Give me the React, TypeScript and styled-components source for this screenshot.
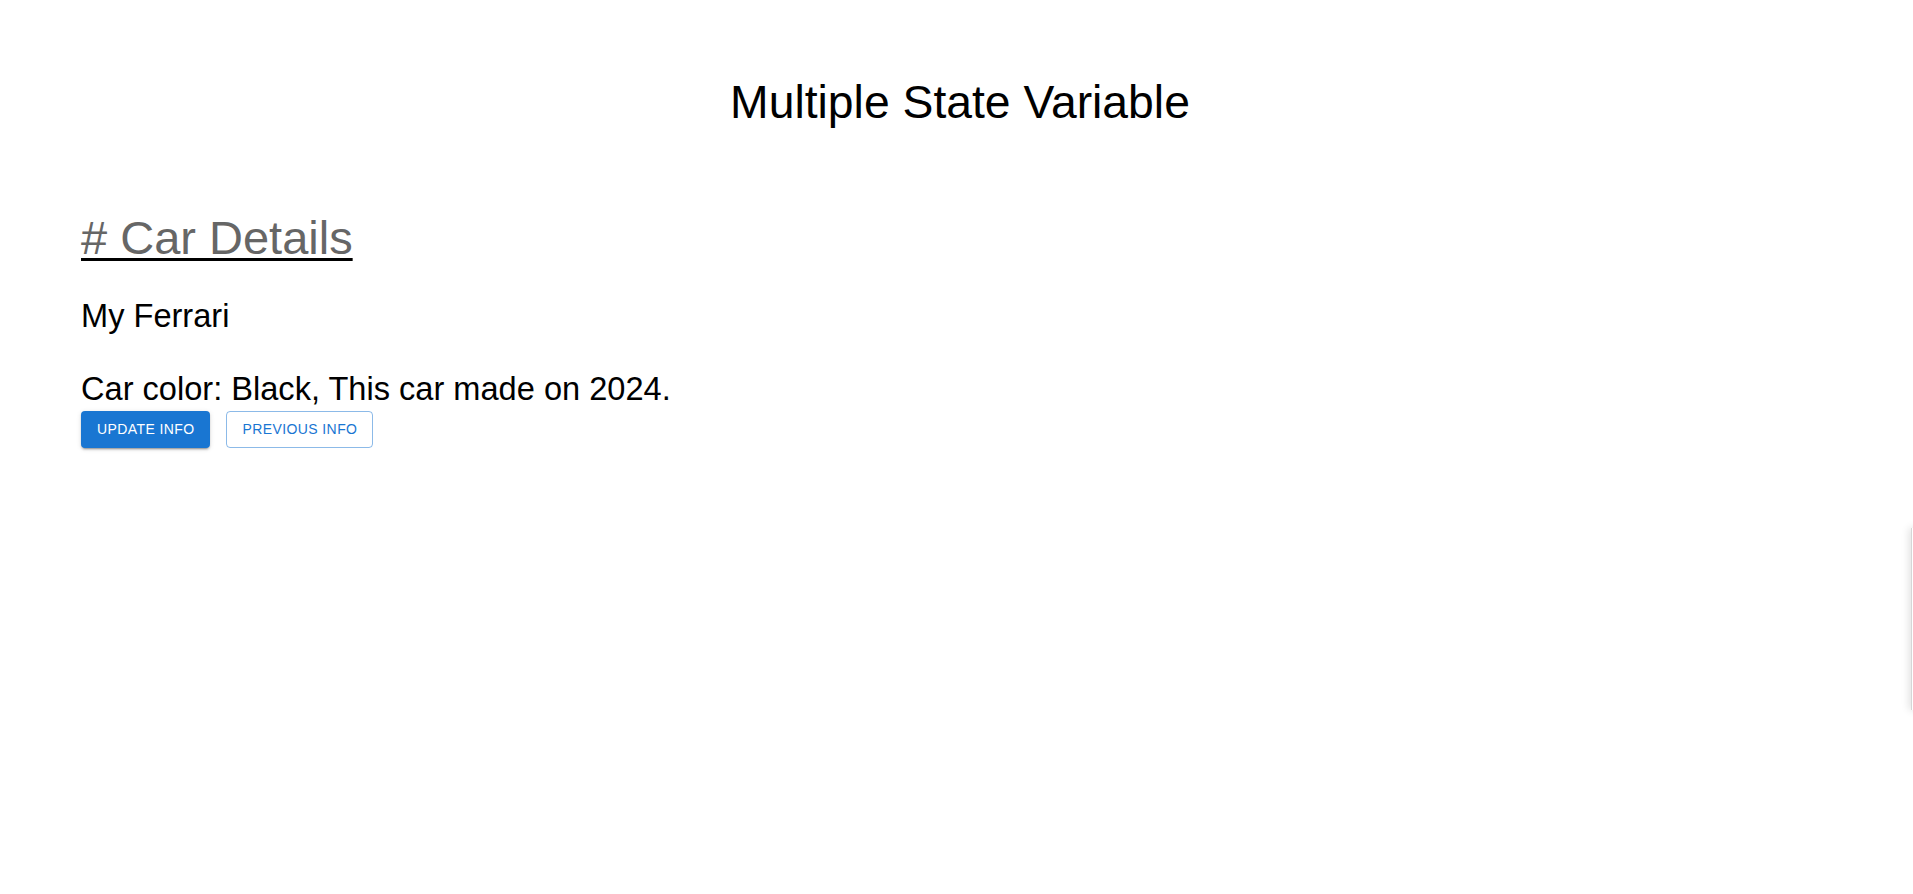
import React from "react";
import styled, { createGlobalStyle } from "styled-components";

const GlobalStyle = createGlobalStyle`
  html, body {
    margin: 0;
    padding: 0;
    background: #ffffff;
    font-family: "Liberation Sans", Arial, sans-serif;
  }
`;

const Page = styled.div`
  display: flex;
  flex-direction: column;
  padding: 76px 0 0 81px;
  min-height: 100vh;
  box-sizing: border-box;
`;

const Title = styled.h1`
  margin: 0 0 82px -74px;
  font-size: 46.3px;
  line-height: 53px;
  font-weight: 400;
  color: #000;
  text-align: center;
`;

const Section = styled.section`
  display: flex;
  flex-direction: column;
  align-items: flex-start;
`;

const CarHeading = styled.h2`
  margin: 0 0 32px;
  font-size: 47px;
  line-height: 54px;
  font-weight: 400;
  color: #666666;
  text-decoration: underline;
  text-decoration-color: #000;
  text-decoration-thickness: 3px;
  text-underline-offset: 4px;
`;

const Line = styled.p<{ $gap: number }>`
  margin: 0 0 ${(p) => p.$gap}px;
  font-size: 32.6px;
  line-height: 37px;
  color: #000;
`;

const Actions = styled.div`
  display: flex;
  gap: 16px;
`;

const Button = styled.button<{ $variant: "contained" | "outlined" }>`
  font-family: "Liberation Sans", Arial, sans-serif;
  font-weight: 400;
  font-size: 14px;
  line-height: 24.5px;
  letter-spacing: 0.4px;
  text-transform: uppercase;
  border-radius: 4px;
  min-width: 64px;
  cursor: pointer;
  box-sizing: border-box;
  ${(p) =>
    p.$variant === "contained"
      ? `
    background: #1976d2;
    color: #fff;
    border: none;
    padding: 6px 16px;
    box-shadow: 0px 3px 1px -2px rgba(0,0,0,0.2), 0px 2px 2px 0px rgba(0,0,0,0.14), 0px 1px 5px 0px rgba(0,0,0,0.12);
  `
      : `
    background: transparent;
    color: #1976d2;
    border: 1px solid rgba(25,118,210,0.5);
    padding: 5px 15px;
  `}
`;

const EdgePanel = styled.div`
  position: fixed;
  top: 528px;
  left: 1911px;
  width: 300px;
  height: 182px;
  background: #fff;
  border-left: 1px solid #d6d6d6;
  box-shadow: -2px 0 8px rgba(0, 0, 0, 0.12);
`;

export default function App() {
  return (
    <>
      <GlobalStyle />
      <Page>
        <Title>Multiple State Variable</Title>
        <Section>
          <CarHeading># Car Details</CarHeading>
          <Line $gap={36}>My Ferrari</Line>
          <Line $gap={4}>Car color: Black, This car made on 2024.</Line>
          <Actions>
            <Button $variant="contained">Update Info</Button>
            <Button $variant="outlined">Previous Info</Button>
          </Actions>
        </Section>
      </Page>
      <EdgePanel />
    </>
  );
}
